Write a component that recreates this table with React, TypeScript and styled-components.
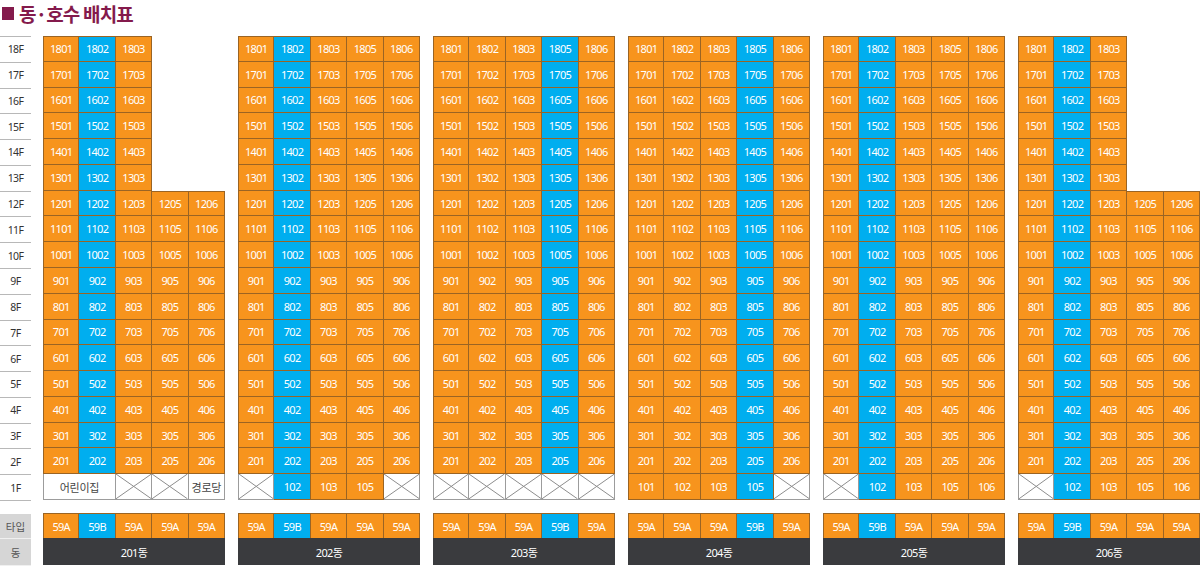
import React from "react";
import styled, { createGlobalStyle, css } from "styled-components";

const GlobalStyle = createGlobalStyle`
  html, body { margin: 0; padding: 0; background: #ffffff; }
  body { width: 1200px; height: 566px; overflow: hidden; font-family: "Noto Sans", "Noto Sans CJK KR", sans-serif; }
`;

const ORANGE = "#f7941d";
const BLUE = "#00aeef";
const LINE = "#9a6424";
const GREY_LINE = "#9c9c9c";

const Page = styled.div`
  width: 1200px;
  height: 566px;
  display: flex;
  flex-direction: column;
`;

const Title = styled.h1`
  margin: 0;
  height: 26px;
  display: flex;
  align-items: center;
  gap: 3px;
  padding-left: 2px;
  font-family: "Noto Sans CJK KR", "Noto Sans", sans-serif;
  font-size: 19px;
  font-weight: 700;
  letter-spacing: -0.8px;
  color: #841a4c;
`;

const Square = styled.span`
  display: inline-block;
  width: 12px;
  height: 13px;
  background: #841a4c;
  margin-right: 2px;
`;

const Board = styled.div`
  margin-top: 10px;
  display: flex;
  gap: 12px;
`;

const LabelColumn = styled.div`
  width: 31px;
  display: flex;
  flex-direction: column;
`;

const FloorLabels = styled.div`
  height: 464px;
  display: grid;
  grid-template-rows: repeat(18, minmax(0, 1fr));
  border-top: 1px solid #b8b8b8;
`;

const FloorLabel = styled.div`
  display: flex;
  align-items: center;
  justify-content: center;
  border-bottom: 1px solid #b8b8b8;
  font-size: 10.5px;
  letter-spacing: -0.6px;
  color: #333;
`;

const Spacer = styled.div`
  height: 13px;
`;

const SideTag = styled.div<{ $h: number }>`
  height: ${(p) => p.$h}px;
  display: flex;
  align-items: center;
  justify-content: center;
  background: #d6d6d6;
  color: #555;
  font-family: "Noto Sans CJK KR", sans-serif;
  font-size: 10.5px;
  border-bottom: 1px solid #f0f0f0;
  box-sizing: border-box;
`;

const Buildings = styled.div`
  display: flex;
  gap: 13px;
`;

const BuildingColumn = styled.div`
  width: 182px;
  display: flex;
  flex-direction: column;
`;

const FloorGrid = styled.div`
  height: 464px;
  display: grid;
  grid-template-columns: repeat(5, minmax(0, 1fr));
  grid-template-rows: repeat(18, minmax(0, 1fr));
`;

const cellText = css`
  display: flex;
  align-items: center;
  justify-content: center;
  font-size: 11px;
  letter-spacing: -0.7px;
  box-sizing: border-box;
  min-height: 0;
  overflow: hidden;
`;

const Unit = styled.div<{ $blue: boolean; $top: boolean; $left: boolean }>`
  ${cellText};
  background: ${(p) => (p.$blue ? BLUE : ORANGE)};
  color: #ffffff;
  border-right: 1px solid ${LINE};
  border-bottom: 1px solid ${LINE};
  border-top: ${(p) => (p.$top ? `1px solid ${LINE}` : "none")};
  border-left: ${(p) => (p.$left ? `1px solid ${LINE}` : "none")};
`;

const Empty = styled.div``;

const Facility = styled.div<{ $span: number; $left: boolean }>`
  ${cellText};
  grid-column: span ${(p) => p.$span};
  background: #ffffff;
  color: #444;
  font-family: "Noto Sans CJK KR", sans-serif;
  letter-spacing: -0.3px;
  border-right: 1px solid ${GREY_LINE};
  border-bottom: 1px solid ${GREY_LINE};
  border-left: ${(p) => (p.$left ? `1px solid ${GREY_LINE}` : "none")};
`;

const Crossed = styled.div<{ $left: boolean }>`
  position: relative;
  min-height: 0;
  overflow: hidden;
  background: #ffffff;
  box-sizing: border-box;
  border-right: 1px solid ${GREY_LINE};
  border-bottom: 1px solid ${GREY_LINE};
  border-left: ${(p) => (p.$left ? `1px solid ${GREY_LINE}` : "none")};
  svg {
    position: absolute;
    inset: 0;
    display: block;
    width: 100%;
    height: 100%;
  }
`;

const TypeRow = styled.div`
  height: 25px;
  display: grid;
  grid-template-columns: repeat(5, minmax(0, 1fr));
`;

const TypeCell = styled.div<{ $blue: boolean; $left: boolean }>`
  ${cellText};
  background: ${(p) => (p.$blue ? BLUE : ORANGE)};
  color: #ffffff;
  border-top: 1px solid ${LINE};
  border-right: 1px solid ${LINE};
  border-left: ${(p) => (p.$left ? `1px solid ${LINE}` : "none")};
`;

const DongBar = styled.div`
  height: 27px;
  display: flex;
  align-items: center;
  justify-content: center;
  background: #3a3b3e;
  color: #ffffff;
  font-family: "Noto Sans", "Noto Sans CJK KR", sans-serif;
  font-size: 11px;
  letter-spacing: -0.6px;
`;

type First =
  | { kind: "x" }
  | { kind: "unit"; n: string }
  | { kind: "text"; label: string; span: number };

type Building = {
  name: string;
  blue: number;
  short: boolean;
  first: First[];
  types: string[];
};

const X: First = { kind: "x" };
const U = (n: string): First => ({ kind: "unit", n });

const BUILDINGS: Building[] = [
  {
    name: "201동",
    blue: 1,
    short: true,
    first: [{ kind: "text", label: "어린이집", span: 2 }, X, X, { kind: "text", label: "경로당", span: 1 }],
    types: ["59A", "59B", "59A", "59A", "59A"],
  },
  {
    name: "202동",
    blue: 1,
    short: false,
    first: [X, U("102"), U("103"), U("105"), X],
    types: ["59A", "59B", "59A", "59A", "59A"],
  },
  {
    name: "203동",
    blue: 3,
    short: false,
    first: [X, X, X, X, X],
    types: ["59A", "59A", "59A", "59B", "59A"],
  },
  {
    name: "204동",
    blue: 3,
    short: false,
    first: [U("101"), U("102"), U("103"), U("105"), X],
    types: ["59A", "59A", "59A", "59B", "59A"],
  },
  {
    name: "205동",
    blue: 1,
    short: false,
    first: [X, U("102"), U("103"), U("105"), U("106")],
    types: ["59A", "59B", "59A", "59A", "59A"],
  },
  {
    name: "206동",
    blue: 1,
    short: true,
    first: [X, U("102"), U("103"), U("105"), U("106")],
    types: ["59A", "59B", "59A", "59A", "59A"],
  },
];

const SUFFIX = ["01", "02", "03", "05", "06"];
const FLOORS = Array.from({ length: 18 }, (_, i) => 18 - i);

const exists = (b: Building, floor: number, col: number) => {
  if (floor < 2 || floor > 18) return false;
  if (b.short && floor >= 13 && col >= 3) return false;
  return true;
};

const Cross = () => (
  <svg viewBox="0 0 100 100" preserveAspectRatio="none">
    <line x1="0" y1="0" x2="100" y2="100" stroke="#8d8d8d" strokeWidth="1" vectorEffect="non-scaling-stroke" />
    <line x1="100" y1="0" x2="0" y2="100" stroke="#8d8d8d" strokeWidth="1" vectorEffect="non-scaling-stroke" />
  </svg>
);

const BuildingBlock: React.FC<{ b: Building }> = ({ b }) => {
  const cells: React.ReactNode[] = [];
  FLOORS.forEach((floor) => {
    if (floor === 1) return;
    SUFFIX.forEach((s, col) => {
      const key = `${floor}-${col}`;
      if (!exists(b, floor, col)) {
        cells.push(<Empty key={key} />);
        return;
      }
      cells.push(
        <Unit
          key={key}
          $blue={col === b.blue}
          $top={!exists(b, floor + 1, col)}
          $left={col === 0 || !exists(b, floor, col - 1)}
        >
          {`${floor}${s}`}
        </Unit>
      );
    });
  });
  let col = 0;
  b.first.forEach((f, i) => {
    const key = `1-${i}`;
    const left = col === 0;
    if (f.kind === "x") {
      cells.push(
        <Crossed key={key} $left={left}>
          <Cross />
        </Crossed>
      );
      col += 1;
    } else if (f.kind === "unit") {
      cells.push(
        <Unit key={key} $blue={col === b.blue} $top={false} $left={left}>
          {f.n}
        </Unit>
      );
      col += 1;
    } else {
      cells.push(
        <Facility key={key} $span={f.span} $left={left}>
          {f.label}
        </Facility>
      );
      col += f.span;
    }
  });

  return (
    <BuildingColumn>
      <FloorGrid>{cells}</FloorGrid>
      <Spacer />
      <TypeRow>
        {b.types.map((t, i) => (
          <TypeCell key={i} $blue={t === "59B"} $left={i === 0}>
            {t}
          </TypeCell>
        ))}
      </TypeRow>
      <DongBar>{b.name}</DongBar>
    </BuildingColumn>
  );
};

export default function App() {
  return (
    <>
      <GlobalStyle />
      <Page>
        <Title>
          <Square />
          동·호수 배치표
        </Title>
        <Board>
          <LabelColumn>
            <FloorLabels>
              {FLOORS.map((f) => (
                <FloorLabel key={f}>{`${f}F`}</FloorLabel>
              ))}
            </FloorLabels>
            <Spacer />
            <SideTag $h={25}>타입</SideTag>
            <SideTag $h={27}>동</SideTag>
          </LabelColumn>
          <Buildings>
            {BUILDINGS.map((b) => (
              <BuildingBlock key={b.name} b={b} />
            ))}
          </Buildings>
        </Board>
      </Page>
    </>
  );
}
